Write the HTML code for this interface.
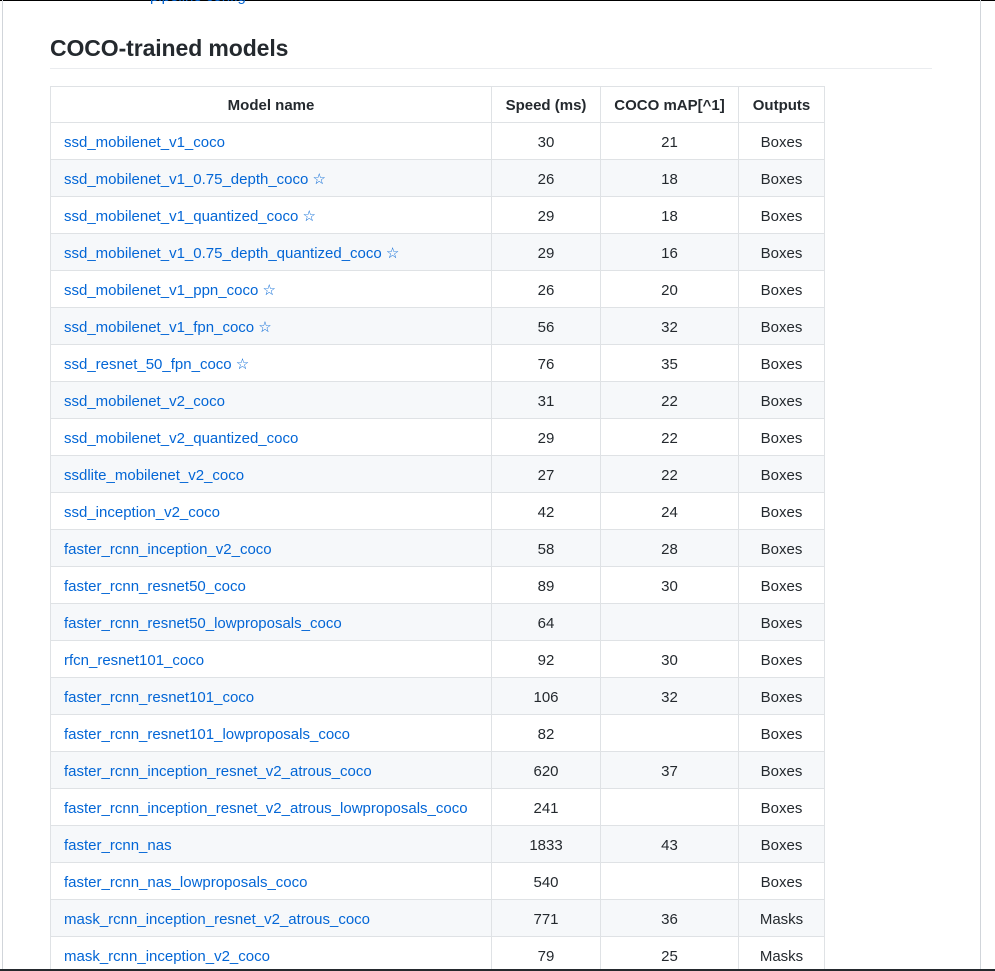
<!DOCTYPE html>
<html><head><meta charset="utf-8"><style>
html,body{margin:0;padding:0;background:#fff;width:995px;height:971px;overflow:hidden;position:relative;font-family:"Liberation Sans",sans-serif;color:#24292e}
.topline{position:absolute;left:0;top:0;width:995px;height:1px;background:#000}
.botline{position:absolute;left:0;top:969px;width:995px;height:2px;background:#24292e}
.lb{position:absolute;left:2px;top:0;width:1px;height:971px;background:#d1d5da}
.rb{position:absolute;left:980px;top:0;width:1px;height:971px;background:#d1d5da}
.toplink{position:absolute;left:150px;top:-12px;color:#0366d6;font-size:15px}
h2{position:absolute;left:50px;top:35px;margin:0;font-size:23px;font-weight:bold;color:#24292e;letter-spacing:-0.1px}
.hr{position:absolute;left:50px;top:68px;width:882px;height:1px;background:#eaecef}
table{position:absolute;left:50px;top:86px;border-collapse:collapse;font-size:15px;table-layout:fixed}
td,th{border:1px solid #dfe2e5;height:37px;padding:2px 13px 0;box-sizing:border-box;text-align:center;white-space:nowrap}
th{font-weight:bold;height:36px}
td:first-child{text-align:left}
td a{color:#0366d6;text-decoration:none}
tr:nth-child(even) td{background:#f6f8fa}
</style></head><body>
<div class="topline"></div><div class="lb"></div><div class="rb"></div>
<div class="toplink">pipeline config</div>
<h2>COCO-trained models</h2>
<div class="hr"></div>
<table>
<colgroup><col style="width:441px"><col style="width:109px"><col style="width:138px"><col style="width:86px"></colgroup>
<thead><tr><th>Model name</th><th>Speed (ms)</th><th>COCO mAP[^1]</th><th>Outputs</th></tr></thead>
<tbody>
<tr><td><a>ssd_mobilenet_v1_coco</a></td><td>30</td><td>21</td><td>Boxes</td></tr>
<tr><td><a>ssd_mobilenet_v1_0.75_depth_coco ☆</a></td><td>26</td><td>18</td><td>Boxes</td></tr>
<tr><td><a>ssd_mobilenet_v1_quantized_coco ☆</a></td><td>29</td><td>18</td><td>Boxes</td></tr>
<tr><td><a>ssd_mobilenet_v1_0.75_depth_quantized_coco ☆</a></td><td>29</td><td>16</td><td>Boxes</td></tr>
<tr><td><a>ssd_mobilenet_v1_ppn_coco ☆</a></td><td>26</td><td>20</td><td>Boxes</td></tr>
<tr><td><a>ssd_mobilenet_v1_fpn_coco ☆</a></td><td>56</td><td>32</td><td>Boxes</td></tr>
<tr><td><a>ssd_resnet_50_fpn_coco ☆</a></td><td>76</td><td>35</td><td>Boxes</td></tr>
<tr><td><a>ssd_mobilenet_v2_coco</a></td><td>31</td><td>22</td><td>Boxes</td></tr>
<tr><td><a>ssd_mobilenet_v2_quantized_coco</a></td><td>29</td><td>22</td><td>Boxes</td></tr>
<tr><td><a>ssdlite_mobilenet_v2_coco</a></td><td>27</td><td>22</td><td>Boxes</td></tr>
<tr><td><a>ssd_inception_v2_coco</a></td><td>42</td><td>24</td><td>Boxes</td></tr>
<tr><td><a>faster_rcnn_inception_v2_coco</a></td><td>58</td><td>28</td><td>Boxes</td></tr>
<tr><td><a>faster_rcnn_resnet50_coco</a></td><td>89</td><td>30</td><td>Boxes</td></tr>
<tr><td><a>faster_rcnn_resnet50_lowproposals_coco</a></td><td>64</td><td></td><td>Boxes</td></tr>
<tr><td><a>rfcn_resnet101_coco</a></td><td>92</td><td>30</td><td>Boxes</td></tr>
<tr><td><a>faster_rcnn_resnet101_coco</a></td><td>106</td><td>32</td><td>Boxes</td></tr>
<tr><td><a>faster_rcnn_resnet101_lowproposals_coco</a></td><td>82</td><td></td><td>Boxes</td></tr>
<tr><td><a>faster_rcnn_inception_resnet_v2_atrous_coco</a></td><td>620</td><td>37</td><td>Boxes</td></tr>
<tr><td><a>faster_rcnn_inception_resnet_v2_atrous_lowproposals_coco</a></td><td>241</td><td></td><td>Boxes</td></tr>
<tr><td><a>faster_rcnn_nas</a></td><td>1833</td><td>43</td><td>Boxes</td></tr>
<tr><td><a>faster_rcnn_nas_lowproposals_coco</a></td><td>540</td><td></td><td>Boxes</td></tr>
<tr><td><a>mask_rcnn_inception_resnet_v2_atrous_coco</a></td><td>771</td><td>36</td><td>Masks</td></tr>
<tr><td><a>mask_rcnn_inception_v2_coco</a></td><td>79</td><td>25</td><td>Masks</td></tr>
</tbody></table>
<div class="botline"></div>
</body></html>
